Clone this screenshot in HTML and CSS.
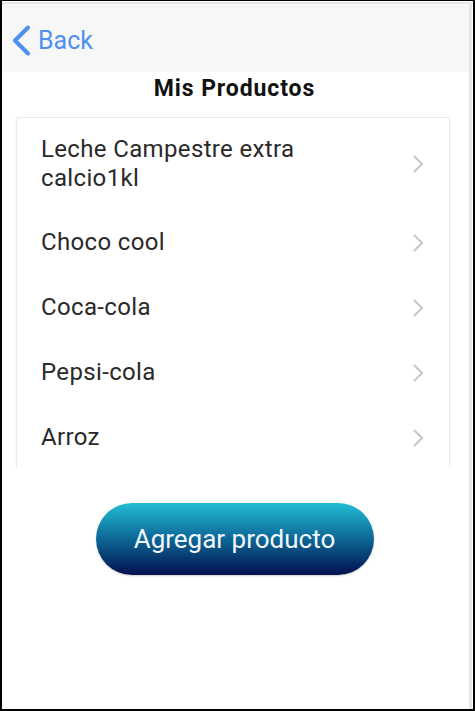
FILE: index.html
```html
<!DOCTYPE html>
<html>
<head>
<meta charset="utf-8">
<link rel="stylesheet" href="styles.css">
</head>
<body>
<div class="frame">
  <div class="app">
    <header class="navbar">
      <a class="back">
        <svg class="back-icon" width="20" height="31" viewBox="0 0 20 31"><path d="M17 2.5 L4 15.5 L17 28.5" fill="none" stroke="#4d90f0" stroke-width="4" stroke-linecap="round" stroke-linejoin="round"/></svg>
        <span>Back</span>
      </a>
    </header>
    <h1 class="title">Mis Productos</h1>
    <div class="list-wrap">
      <ul class="list">
        <li class="item"><span class="label">Leche Campestre extra calcio1kl</span><svg class="chev" width="12" height="20" viewBox="0 0 12 20"><path d="M2 2 L10 10 L2 18" fill="none" stroke="#c8c8c8" stroke-width="2.2"/></svg></li>
        <li class="item"><span class="label">Choco cool</span><svg class="chev" width="12" height="20" viewBox="0 0 12 20"><path d="M2 2 L10 10 L2 18" fill="none" stroke="#c8c8c8" stroke-width="2.2"/></svg></li>
        <li class="item"><span class="label">Coca-cola</span><svg class="chev" width="12" height="20" viewBox="0 0 12 20"><path d="M2 2 L10 10 L2 18" fill="none" stroke="#c8c8c8" stroke-width="2.2"/></svg></li>
        <li class="item"><span class="label">Pepsi-cola</span><svg class="chev" width="12" height="20" viewBox="0 0 12 20"><path d="M2 2 L10 10 L2 18" fill="none" stroke="#c8c8c8" stroke-width="2.2"/></svg></li>
        <li class="item"><span class="label">Arroz</span><svg class="chev" width="12" height="20" viewBox="0 0 12 20"><path d="M2 2 L10 10 L2 18" fill="none" stroke="#c8c8c8" stroke-width="2.2"/></svg></li>
      </ul>
    </div>
    <div class="actions">
      <div class="btn">Agregar producto</div>
    </div>
  </div>
</div>
</body>
</html>
```
FILE: styles.css
```css
html, body {
  margin: 0;
  padding: 0;
  background: #000;
}
body {
  width: 475px;
  height: 711px;
  font-family: Roboto, "Noto Sans", sans-serif;
}
.frame {
  box-sizing: border-box;
  width: 475px;
  height: 711px;
  border-style: solid;
  border-color: #000;
  border-width: 1px 2px 2px 2px;
  background: #fff;
  padding: 1px 1px 0 0;
}
.app {
  box-sizing: border-box;
  height: 100%;
  border-top: 2px solid #e6e6e6;
  border-right: 3px solid #e6e6e6;
  background: #fff;
  display: flex;
  flex-direction: column;
}
.navbar {
  height: 68px;
  background: #f7f7f7;
  display: flex;
  align-items: center;
  padding-left: 9px;
  padding-top: 4px;
  box-sizing: border-box;
}
.back {
  display: flex;
  align-items: center;
  gap: 7px;
  color: #4d90f0;
  font-size: 25px;
}
.back-icon {
  display: block;
}
.title {
  margin: 0;
  font-size: 23px;
  letter-spacing: 0.9px;
  font-weight: bold;
  color: #111;
  text-align: center;
  line-height: 34px;
  height: 45px;
  padding-right: 2px;
}
.list-wrap {
  height: 350px;
  overflow: hidden;
  padding: 0 19px 0 14px;
}
.list {
  list-style: none;
  margin: 0;
  padding: 0 0 30px 0;
  border: 1px solid #ebebeb;
  border-radius: 3px;
  box-shadow: 0 0 2px rgba(0,0,0,0.08);
  background: #fff;
}
.item {
  display: flex;
  align-items: center;
  justify-content: space-between;
  padding: 18px 25px 18px 24px;
  min-height: 28px;
  font-size: 24px;
  letter-spacing: 0.35px;
  line-height: 29px;
  color: #2a2a2a;
}
.item:first-child {
  padding-top: 17px;
  padding-bottom: 17px;
}
.label {
  max-width: 300px;
}
.chev {
  display: block;
  flex-shrink: 0;
}
.actions {
  display: flex;
  justify-content: center;
  padding-top: 36px;
  padding-right: 2px;
}
.btn {
  width: 278px;
  height: 72px;
  border-radius: 36px;
  background: linear-gradient(to bottom, #22bdd4 0%, #0e6f9c 45%, #03104f 100%);
  color: #f2f6fa;
  font-size: 26px;
  display: flex;
  align-items: center;
  justify-content: center;
  box-shadow: 0 1px 2px rgba(0,0,0,0.2);
}
```
